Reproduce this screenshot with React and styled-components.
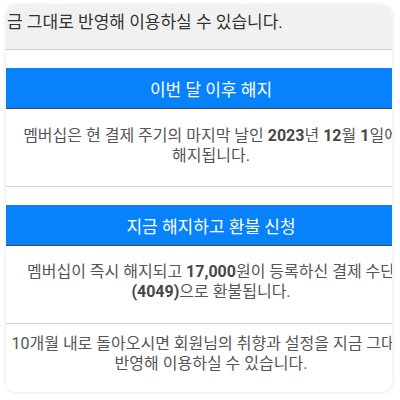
import React from 'react';
import styled, { createGlobalStyle } from 'styled-components';

const GlobalStyle = createGlobalStyle`
  html, body {
    margin: 0;
    padding: 0;
    background: #ffffff;
  }
  body {
    font-family: Roboto, "Noto Sans CJK KR", sans-serif;
  }
`;

const Page = styled.div`
  padding: 5px 8px 8px 6px;
`;

const Card = styled.div`
  width: 386px;
  height: 387px;
  background: #ffffff;
  border-radius: 10px;
  box-shadow: 0 0 4px rgba(0, 0, 0, 0.12);
  overflow: hidden;
  display: flex;
  flex-direction: column;
`;

const Notice = styled.div`
  height: 45px;
  background: #f1f1f1;
  border-bottom: 1px solid #cfcfcf;
  padding: 7px 0 0 1px;
  box-sizing: border-box;
  font-size: 17px;
  line-height: 20px;
  color: #333333;
  white-space: nowrap;
`;

const Option = styled.section`
  display: flex;
  flex-direction: column;
  padding-top: 18px;
  border-bottom: ${({ $last }) => ($last ? 'none' : '1px solid #d4d4d4')};
`;

const ActionButton = styled.button`
  height: 41px;
  border: none;
  border-bottom: 1px solid #4a4a4a;
  background: #0782fb;
  color: #ffffff;
  font-family: Roboto, "Noto Sans CJK KR", sans-serif;
  font-size: 17px;
  padding: 0 0 0 24px;
  cursor: pointer;
`;

const Text = styled.div`
  display: flex;
  flex-direction: column;
  align-items: center;
  margin: ${({ $top }) => $top}px 0 0 24px;
  padding-bottom: ${({ $bottom }) => $bottom}px;
  width: 362px;
  font-size: 16px;
  line-height: 20px;
  color: #555555;
`;

const Line = styled.span`
  white-space: nowrap;

  b {
    color: #474747;
    font-weight: 700;
  }
`;

export default function App() {
  return (
    <>
      <GlobalStyle />
      <Page>
        <Card>
          <Notice>금 그대로 반영해 이용하실 수 있습니다.</Notice>

          <Option>
            <ActionButton>이번 달 이후 해지</ActionButton>
            <Text $top={17} $bottom={20}>
              <Line>
                멤버십은 현 결제 주기의 마지막 날인 <b>2023</b>년 <b>12</b>월 <b>1</b>일에
              </Line>
              <Line>해지됩니다.</Line>
            </Text>
          </Option>

          <Option>
            <ActionButton>지금 해지하고 환불 신청</ActionButton>
            <Text $top={16} $bottom={21}>
              <Line>
                멤버십이 즉시 해지되고 <b>17,000</b>원이 등록하신 결제 수단
              </Line>
              <Line>
                <b>(4049)</b>으로 환불됩니다.
              </Line>
            </Text>
          </Option>

          <Option $last>
            <Text $top={-8} $bottom={0}>
              <Line>10개월 내로 돌아오시면 회원님의 취향과 설정을 지금 그대로</Line>
              <Line>반영해 이용하실 수 있습니다.</Line>
            </Text>
          </Option>
        </Card>
      </Page>
    </>
  );
}
